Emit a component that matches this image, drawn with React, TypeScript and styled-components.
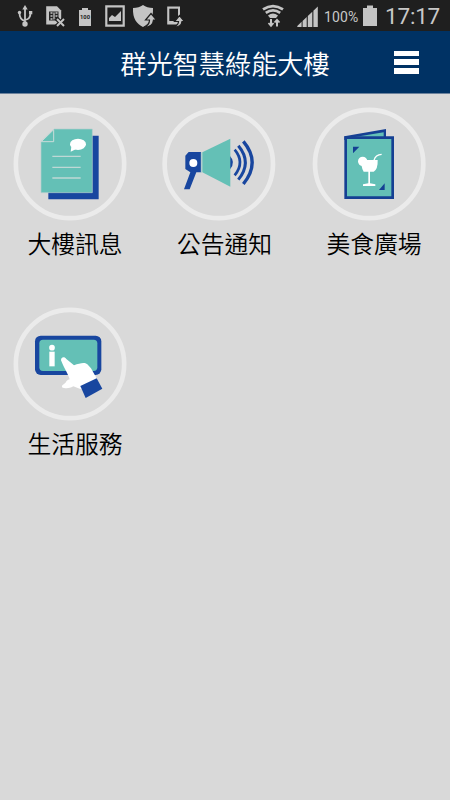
import React from "react";
import styled, { createGlobalStyle } from "styled-components";

const GlobalStyle = createGlobalStyle`
  * { box-sizing: border-box; }
  body { margin: 0; background: #d9d9d9; overflow: hidden; }
`;

const cjk = `"Noto Sans CJK TC", "Noto Sans", sans-serif`;

const Screen = styled.main`
  width: 450px;
  height: 800px;
  display: flex;
  flex-direction: column;
  background: #d9d9d9;
  font-family: ${cjk};
`;

const StatusBar = styled.div`
  height: 31px;
  flex: none;
  display: flex;
  align-items: center;
  background: #1f1f1f;
  color: #c8c8c8;
  font-family: Roboto, sans-serif;
`;

const StatusIcons = styled.svg<{ $width: number }>`
  display: block;
  flex: none;
  width: ${(p) => p.$width}px;
  height: 31px;
`;

const Percent = styled.span`
  width: 38px;
  margin: 2px 0 0 1px;
  font-size: 14px;
  line-height: 16px;
  letter-spacing: 0.1px;
  white-space: nowrap;
`;

const Clock = styled.time`
  margin: 0 0 0 6px;
  font-size: 22.5px;
  line-height: 26px;
  font-weight: 400;
  letter-spacing: -0.2px;
`;

const Header = styled.header`
  height: 63px;
  flex: none;
  display: grid;
  grid-template-columns: 88px 1fr 88px;
  align-items: center;
  background: #003264;
  border-bottom: 1px solid #6c829c;
`;

const Title = styled.h1`
  grid-column: 2;
  margin: 1px 0 0;
  color: #fff;
  font-size: 26.2px;
  line-height: 38px;
  font-weight: 350;
  text-align: center;
  white-space: nowrap;
`;

const MenuButton = styled.button`
  width: 25px;
  height: 23px;
  margin-left: 31.5px;
  padding: 0;
  border: 0;
  background: none;
  display: flex;
  flex-direction: column;
  justify-content: space-between;
`;

const MenuLine = styled.span`
  height: 5.5px;
  background: #fff;
`;

const Grid = styled.section`
  display: grid;
  grid-template-columns: repeat(3, 150px);
  grid-auto-rows: 200px;
  padding-top: 6px;
`;

const Tile = styled.div`
  display: flex;
  flex-direction: column;
`;

const TileIcon = styled.svg`
  display: block;
  width: 130px;
  height: 126px;
  margin-left: 5px;
`;

const TileLabel = styled.span<{ $shift: number }>`
  margin-left: ${(p) => p.$shift}px;
  color: #000;
  font-size: 23.8px;
  line-height: 34px;
  font-weight: 350;
  text-align: center;
`;

const teal = "#64c0b6";
const blue = "#18469f";

const NoticeArt = () => (
  <>
    <path d="M130 107H281V298H130Z" fill={blue} />
    <path d="M147 87H262V278H108V125Z" fill={teal} stroke="#b7cfce" strokeWidth="2" />
    <path d="M146 89V125H109Z" fill={teal} stroke="#c9dcd9" strokeWidth="3" />
    <ellipse cx="219" cy="133" rx="24" ry="17" fill="#fff" />
    <path d="M199 140L197 155L212 148Z" fill="#fff" />
    <path d="M142 169H227M142 202H227M142 234H227" stroke="#bed8d5" strokeWidth="4" />
  </>
);

const MegaphoneArt = () => (
  <>
    <path d="M101 156H138V217H124L104 268H87L106 217L91 207V167Z" fill={blue} />
    <circle cx="115" cy="189" r="12" fill="#fff" />
    <path d="M225 168Q243 187 225 208Z" fill={blue} />
    <path d="M142 157L226 116V260L142 217Z" fill={teal} />
    <path d="M139 157V218" stroke="#a8c9ca" strokeWidth="3" />
    <g fill="none" stroke={blue}>
      <path d="M239 149Q271 187 239 226" strokeWidth="8" />
      <path d="M250 137Q292 187 250 239" strokeWidth="9" />
      <path d="M265 124Q318 187 265 252" strokeWidth="10" />
    </g>
  </>
);

const MenuArt = () => (
  <>
    <path d="M118 109L243 87V120H118Z" fill="#154093" />
    <path d="M145 112L236 97V112Z" fill={teal} />
    <path d="M122 113H263V293H122Z" fill={teal} stroke="#154093" strokeWidth="8" />
    <path d="M144 140H163L144 160ZM239 250V270H222Z" fill="#154093" />
    <circle cx="173" cy="184" r="14" fill="#fff" />
    <path d="M170 180H218Q219 208 206 215H176Q167 201 170 180Z" fill="#fff" />
    <path d="M207 181Q211 164 230 163" fill="none" stroke="#fff" strokeWidth="4" />
    <path d="M190 213H195V250L211 253V258H174V253L190 250Z" fill="#fff" />
  </>
);

const TouchArt = () => (
  <>
    <rect x="90" y="107" width="199" height="118" rx="17" fill={blue} />
    <rect x="103" y="119" width="174" height="94" rx="11" fill={teal} />
    <circle cx="141" cy="143" r="8.5" fill="#fff" />
    <path d="M133 155H149V199H133Z" fill="#fff" />
    <path
      d="M168 181C168 169 180 170 184 177L207 196C225 190 238 186 247 193L258 205L276 237L240 265L226 267L205 259C193 266 184 265 177 264C168 263 169 256 178 251C187 247 179 243 194 238C189 221 177 204 168 181Z"
      fill="#fff"
    />
    <path d="M226 258L275 235L292 266L242 294Z" fill={blue} />
  </>
);

const services = [
  { label: "大樓訊息", cx: 195, shift: 0, Art: NoticeArt },
  { label: "公告通知", cx: 191.5, shift: -1, Art: MegaphoneArt },
  { label: "美食廣場", cx: 192.5, shift: -2, Art: MenuArt },
  { label: "生活服務", cx: 195, shift: 0, Art: TouchArt },
];

const gray = "#c4c4c4";

const NotificationIcons = () => (
  <StatusIcons $width={250} viewBox="0 0 250 31" fill="none" stroke={gray}>
    <g strokeWidth="1.8">
      <path d="M25 9V22M25 21C21 20 19.5 18 19.5 13M25 20C29 19 30.5 17.5 30.5 12" />
      <path d="M25 5L22.3 9.5H27.7Z" fill={gray} stroke="none" />
      <circle cx="25" cy="24" r="2.7" fill={gray} stroke="none" />
      <circle cx="19.5" cy="12.5" r="1.7" fill={gray} stroke="none" />
      <path d="M29 11H32.3V14.3H29Z" fill={gray} stroke="none" />
    </g>
    <path d="M46.2 6.2H57L61.2 10.5V24.5H46.2Z" fill={gray} stroke="none" />
    <path d="M49 11.5H58.5V20.5H49Z" fill="#262626" stroke="none" />
    <path d="M50.5 13H52.5M50.5 16H52.5M50.5 19H52.5M54 12.5V19.5M55.5 13H57.5M55.5 16H57.5M55.5 19H57.5" strokeWidth="1.3" />
    <path d="M56 18L65 27M65 18L56 27" stroke="#1f1f1f" strokeWidth="4.5" />
    <path d="M57 19L64 26M64 19L57 26" strokeWidth="2" />
    <path d="M79 10H82V8H88V10H91V26H79Z" fill={gray} stroke="none" />
    <text x="85" y="19.3" fill="#222" stroke="none" fontFamily="Roboto, sans-serif" fontSize="5.8" fontWeight="700" textAnchor="middle">100</text>
    <path d="M106.3 6.3H123.7V25.7H106.3Z" strokeWidth="2.2" />
    <path d="M109 21V18L112 15L115 17L121 11V21Z" fill={gray} stroke="none" />
    <path d="M133 8Q139 8 143 5Q147 8 153 8C153.5 19 149 24 143 27C137 24 132.5 19 133 8Z" fill={gray} stroke="none" />
    <path d="M144 27.5Q149.5 25 149.5 20H145.5L151 13.5L156.5 20H153.5Q153 27 144 27.5Z" fill={gray} stroke="#1f1f1f" strokeWidth="1.2" />
    <path d="M167.2 6.5H180V24.5H167.2Z" fill={gray} stroke="none" />
    <path d="M169.3 8.7H178V21H169.3Z" fill="#1f1f1f" stroke="none" />
    <path d="M174 27Q178.5 25 178.5 21.5H174.5L179.5 15.5L184.5 21.5H182Q181.5 27 174 27Z" fill={gray} stroke="#1f1f1f" strokeWidth="1.2" />
  </StatusIcons>
);

const SignalIcons = () => (
  <StatusIcons $width={73} viewBox="250 0 73 31" fill="none" stroke={gray}>
    <path d="M263 9.3Q273 2.8 283 9.3M265.8 12.8Q273 8 280.2 12.8" strokeWidth="2.8" />
    <path d="M268 15.5Q273 11.7 278 15.5L276 18H270Z" fill={gray} stroke="none" />
    <path d="M271 19V26M277 26.5V20" strokeWidth="2" />
    <path d="M268.5 23L271 25.8L273.5 23M274.5 22.5L277 19.8L279.5 22.5" strokeWidth="1.8" />
    <path
      d="M297.3 27V26L301.6 21.8V27ZM302.6 27V21L306.7 17V27ZM307.8 27V16L312.3 11.8V27ZM313.4 27V10.8L317.8 6.5V27Z"
      fill={gray}
      stroke="none"
    />
  </StatusIcons>
);

const BatteryIcon = () => (
  <StatusIcons $width={17} viewBox="362 0 17 31">
    <path d="M363 8H367V5.5H373V8H377V26H363Z" fill={gray} />
  </StatusIcons>
);

export default function App() {
  return (
    <Screen>
      <GlobalStyle />
      <StatusBar>
        <NotificationIcons />
        <SignalIcons />
        <Percent>100%</Percent>
        <BatteryIcon />
        <Clock>17:17</Clock>
      </StatusBar>
      <Header>
        <Title>群光智慧綠能大樓</Title>
        <MenuButton aria-label="選單">
          <MenuLine />
          <MenuLine />
          <MenuLine />
        </MenuButton>
      </Header>
      <Grid>
        {services.map(({ label, cx, shift, Art }) => (
          <Tile key={label}>
            <TileIcon viewBox="0 0 390 378">
              <circle cx={cx} cy="192" r="162.5" fill="none" stroke="#ebebeb" strokeWidth="14" />
              <Art />
            </TileIcon>
            <TileLabel $shift={shift}>{label}</TileLabel>
          </Tile>
        ))}
      </Grid>
    </Screen>
  );
}
